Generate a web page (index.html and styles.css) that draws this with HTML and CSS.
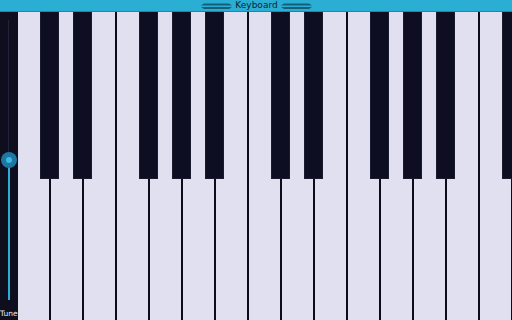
FILE: index.html
```html
<!DOCTYPE html>
<html lang="en">
<head>
    <meta charset="UTF-8">
    <meta name="viewport" content="width=device-width, initial-scale=1.0">
    <title>Keyboard</title>
    <link rel="stylesheet" href="styles.css">
</head>
<body>
    <div class="app">
        <header class="titlebar">
            <svg class="grip" width="31" height="8" viewBox="0 0 31 8">
                <path d="M0 3.5 L3 1.5 H28 L31 3.5 Z" fill="#175d78"/>
                <path d="M0 5 L3 7 H28 L31 5 Z" fill="#175d78"/>
            </svg>
            <span class="title">Keyboard</span>
            <svg class="grip" width="31" height="8" viewBox="0 0 31 8">
                <path d="M0 3.5 L3 1.5 H28 L31 3.5 Z" fill="#175d78"/>
                <path d="M0 5 L3 7 H28 L31 5 Z" fill="#175d78"/>
            </svg>
        </header>

        <main class="body">
            <aside class="tune">
                <div class="slider">
                    <div class="track-dim"></div>
                    <div class="knob"></div>
                    <div class="track-fill"></div>
                </div>
                <span class="tune-label">Tune</span>
            </aside>

            <div class="keys">
                <div class="white"><div class="black"></div></div>
                <div class="white"><div class="black"></div></div>
                <div class="white"></div>
                <div class="white"><div class="black"></div></div>
                <div class="white"><div class="black"></div></div>
                <div class="white"><div class="black"></div></div>
                <div class="white"></div>
                <div class="white"><div class="black"></div></div>
                <div class="white"><div class="black"></div></div>
                <div class="white"></div>
                <div class="white"><div class="black"></div></div>
                <div class="white"><div class="black"></div></div>
                <div class="white"><div class="black"></div></div>
                <div class="white"></div>
                <div class="white"><div class="black"></div></div>
            </div>
        </main>
    </div>
</body>
</html>
```

FILE: styles.css
```css
body {
    margin: 0;
    background: #0d0d1c;
    font-family: 'DejaVu Sans', sans-serif;
    overflow: hidden;
}
.app {
    width: 512px;
    height: 320px;
    display: flex;
    flex-direction: column;
    overflow: hidden;
}
.titlebar {
    height: 11px;
    border-bottom: 1px solid #1f86a8;
    background: #2aaed4;
    display: flex;
    align-items: center;
    justify-content: center;
    gap: 3px;
    padding-left: 1px;
}
.title {
    font-size: 9px;
    line-height: 11px;
    color: #0f2230;
}
.grip {
    display: block;
}
.body {
    flex: 1;
    display: flex;
    min-height: 0;
}
.tune {
    width: 18px;
    flex-shrink: 0;
    display: flex;
    flex-direction: column;
    align-items: flex-start;
    background: #0e0e1f;
}
.slider {
    flex: 1;
    width: 17px;
    display: flex;
    flex-direction: column;
    align-items: center;
    padding-top: 8px;
}
.track-dim {
    width: 1px;
    height: 132px;
    background: #22233a;
}
.knob {
    width: 16px;
    height: 16px;
    border-radius: 50%;
    background: #1d77a0;
    display: flex;
    align-items: center;
    justify-content: center;
    position: relative;
    z-index: 1;
}
.knob::after {
    content: "";
    width: 6px;
    height: 6px;
    border-radius: 50%;
    background: #3cb9e2;
}
.track-fill {
    width: 2px;
    height: 140px;
    margin-top: -8px;
    background: #2aaed4;
}
.tune-label {
    font-size: 7.5px;
    line-height: 9px;
    color: #e8e8f0;
    padding-bottom: 2px;
}
.keys {
    flex: 1;
    display: flex;
    background: #0d0d1a;
    overflow: hidden;
}
.white {
    width: 31px;
    flex-shrink: 0;
    margin-right: 2px;
    background: #e1e0f0;
    position: relative;
}
.black {
    position: absolute;
    top: 0;
    right: -10px;
    width: 17px;
    height: 166px;
    background: #0d0e22;
    border: 1px solid #1a1b2e;
    border-top: none;
    z-index: 1;
}
```
